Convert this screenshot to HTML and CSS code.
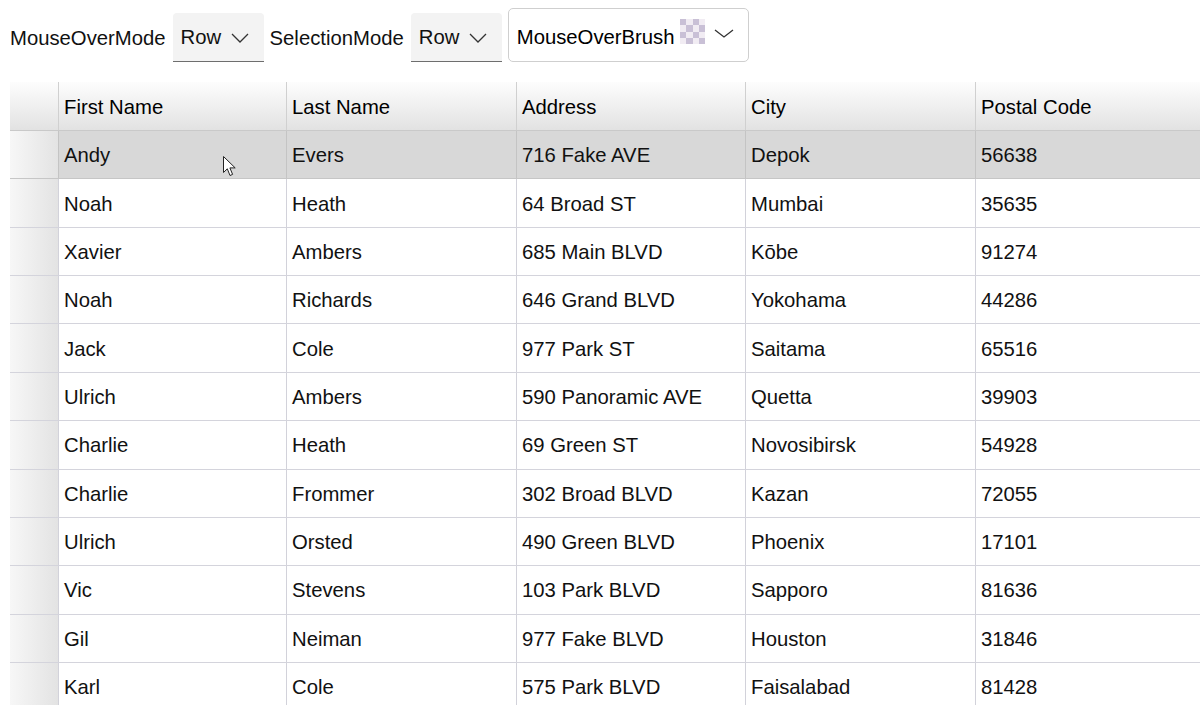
FILE: index.html
```html
<!DOCTYPE html>
<html>
<head>
<meta charset="utf-8">
<link rel="stylesheet" href="styles.css">
</head>
<body>
<div class="toolbar">
  <span class="label">MouseOverMode</span>
  <div class="combo"><span>Row</span><svg class="chev" width="18" height="10" viewBox="0 0 18 10"><path d="M1 1 L9 9 L17 1" fill="none" stroke="#333" stroke-width="1.3"/></svg></div>
  <span class="label">SelectionMode</span>
  <div class="combo"><span>Row</span><svg class="chev" width="18" height="10" viewBox="0 0 18 10"><path d="M1 1 L9 9 L17 1" fill="none" stroke="#333" stroke-width="1.3"/></svg></div>
  <div class="brush">
    <span class="brush-text">MouseOverBrush</span>
    <svg class="checker" width="25" height="25" viewBox="0 0 4 4" shape-rendering="crispEdges">
      <rect width="4" height="4" fill="#f1ecf3"/>
      <rect x="0" y="0" width="1" height="1" fill="#c9c0d6"/><rect x="2" y="0" width="1" height="1" fill="#c9c0d6"/>
      <rect x="1" y="1" width="1" height="1" fill="#c9c0d6"/><rect x="3" y="1" width="1" height="1" fill="#c9c0d6"/>
      <rect x="0" y="2" width="1" height="1" fill="#c9c0d6"/><rect x="2" y="2" width="1" height="1" fill="#c9c0d6"/>
      <rect x="1" y="3" width="1" height="1" fill="#c9c0d6"/><rect x="3" y="3" width="1" height="1" fill="#c9c0d6"/>
    </svg>
    <svg class="chev2" width="20" height="9" viewBox="0 0 20 9"><path d="M1 1 L10 8 L19 1" fill="none" stroke="#333" stroke-width="1.3"/></svg>
  </div>
</div>
<div class="grid">
  <div class="row head">
    <div class="ind"></div><div class="cell">First Name</div><div class="cell">Last Name</div><div class="cell">Address</div><div class="cell">City</div><div class="cell">Postal Code</div>
  </div>
  <div class="row hover">
    <div class="ind"></div><div class="cell">Andy</div><div class="cell">Evers</div><div class="cell">716 Fake AVE</div><div class="cell">Depok</div><div class="cell">56638</div>
  </div>
  <div class="row"><div class="ind"></div><div class="cell">Noah</div><div class="cell">Heath</div><div class="cell">64 Broad ST</div><div class="cell">Mumbai</div><div class="cell">35635</div></div>
  <div class="row"><div class="ind"></div><div class="cell">Xavier</div><div class="cell">Ambers</div><div class="cell">685 Main BLVD</div><div class="cell">Kōbe</div><div class="cell">91274</div></div>
  <div class="row"><div class="ind"></div><div class="cell">Noah</div><div class="cell">Richards</div><div class="cell">646 Grand BLVD</div><div class="cell">Yokohama</div><div class="cell">44286</div></div>
  <div class="row"><div class="ind"></div><div class="cell">Jack</div><div class="cell">Cole</div><div class="cell">977 Park ST</div><div class="cell">Saitama</div><div class="cell">65516</div></div>
  <div class="row"><div class="ind"></div><div class="cell">Ulrich</div><div class="cell">Ambers</div><div class="cell">590 Panoramic AVE</div><div class="cell">Quetta</div><div class="cell">39903</div></div>
  <div class="row"><div class="ind"></div><div class="cell">Charlie</div><div class="cell">Heath</div><div class="cell">69 Green ST</div><div class="cell">Novosibirsk</div><div class="cell">54928</div></div>
  <div class="row"><div class="ind"></div><div class="cell">Charlie</div><div class="cell">Frommer</div><div class="cell">302 Broad BLVD</div><div class="cell">Kazan</div><div class="cell">72055</div></div>
  <div class="row"><div class="ind"></div><div class="cell">Ulrich</div><div class="cell">Orsted</div><div class="cell">490 Green BLVD</div><div class="cell">Phoenix</div><div class="cell">17101</div></div>
  <div class="row"><div class="ind"></div><div class="cell">Vic</div><div class="cell">Stevens</div><div class="cell">103 Park BLVD</div><div class="cell">Sapporo</div><div class="cell">81636</div></div>
  <div class="row"><div class="ind"></div><div class="cell">Gil</div><div class="cell">Neiman</div><div class="cell">977 Fake BLVD</div><div class="cell">Houston</div><div class="cell">31846</div></div>
  <div class="row"><div class="ind"></div><div class="cell">Karl</div><div class="cell">Cole</div><div class="cell">575 Park BLVD</div><div class="cell">Faisalabad</div><div class="cell">81428</div></div>
</div>
<svg class="cursor" width="14" height="21" viewBox="0 0 14 21"><path d="M0.5 0.5 L0.5 16.5 L4.3 12.8 L7 19.5 L9.6 18.4 L6.9 11.9 L12.2 11.9 Z" fill="#fff" stroke="#222" stroke-width="1" stroke-linejoin="miter"/></svg>
</body>
</html>
```
FILE: styles.css
```css
html, body {
  margin: 0;
  padding: 0;
  background: #fff;
  overflow: hidden;
  width: 1200px;
  height: 713px;
}
body {
  font-family: "Liberation Sans", Arial, sans-serif;
  font-size: 20.3px;
  color: #111;
  position: relative;
}
.toolbar {
  display: flex;
  align-items: flex-end;
  height: 54px;
  padding: 8px 0 0 10px;
}
.label {
  height: 49px;
  line-height: 50px;
  margin-right: 7px;
}
.combo {
  box-sizing: border-box;
  width: 91px;
  height: 49px;
  background: #f3f3f3;
  border-bottom: 1px solid #6e6e6e;
  border-radius: 4px 4px 0 0;
  display: flex;
  align-items: center;
  padding: 1px 0 0 8px;
  margin-right: 6px;
}
.combo .chev {
  margin-left: 10px;
  margin-top: 1px;
}
.brush {
  box-sizing: border-box;
  width: 241px;
  height: 54px;
  border: 1px solid #cfcfcf;
  border-radius: 5px;
  display: flex;
  align-items: center;
  padding-left: 8px;
  color: #000;
}
.brush-text {
  padding-top: 4px;
}
.brush .checker {
  margin-left: 5px;
  margin-bottom: 8px;
}
.brush .chev2 {
  margin-left: 9px;
  margin-bottom: 4px;
}
.grid {
  margin: 20px 0 0 10px;
  height: 623px;
  overflow: hidden;
  width: 1190px;
}
.row {
  display: grid;
  grid-template-columns: 48px 228px 230px 229px 230px 240px;
  box-sizing: border-box;
  height: 48.36px;
  border-bottom: 1px solid #d4d4dc;
}
.row.head {
  height: 49px;
  border-bottom: 1px solid #c9c9c9;
  background: linear-gradient(#fdfdfd, #e2e2e2);
  color: #000;
}
.ind {
  background: linear-gradient(to right, #f7f7f7, #e3e3e3);
}
.row.head .ind {
  background: transparent;
}
.cell {
  border-left: 1px solid #d2d2da;
  padding: 2px 0 0 5px;
  display: flex;
  align-items: center;
  white-space: nowrap;
  overflow: hidden;
}
.row.head .cell {
  border-left-color: #d0d0d0;
}
.row.hover .cell {
  background: #d8d8d8;
  border-left-color: #c4c4c4;
}
.row.hover {
  border-bottom-color: #c6c6c6;
}
.cursor {
  position: absolute;
  left: 223px;
  top: 156px;
}
```
